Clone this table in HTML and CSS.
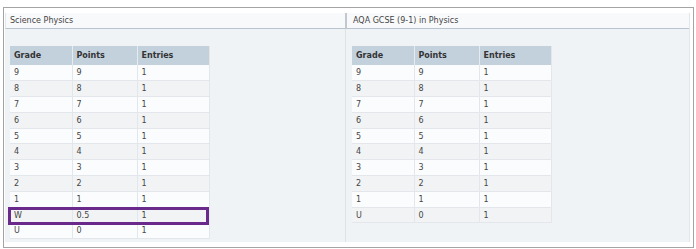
FILE: index.html
```html
<!DOCTYPE html>
<html>
<head>
<meta charset="utf-8">
<link rel="stylesheet" href="styles.css">
</head>
<body>
<div class="outer">
  <div class="panels">
    <div class="panel">
      <div class="panel-head">Science Physics</div>
      <div class="panel-body">
        <div class="table-wrap">
          <table class="grades">
            <colgroup><col class="c1"><col class="c2"><col class="c3"></colgroup>
            <thead><tr><th>Grade</th><th>Points</th><th>Entries</th></tr></thead>
            <tbody>
              <tr><td>9</td><td>9</td><td>1</td></tr>
              <tr><td>8</td><td>8</td><td>1</td></tr>
              <tr><td>7</td><td>7</td><td>1</td></tr>
              <tr><td>6</td><td>6</td><td>1</td></tr>
              <tr><td>5</td><td>5</td><td>1</td></tr>
              <tr><td>4</td><td>4</td><td>1</td></tr>
              <tr><td>3</td><td>3</td><td>1</td></tr>
              <tr><td>2</td><td>2</td><td>1</td></tr>
              <tr><td>1</td><td>1</td><td>1</td></tr>
              <tr><td>W</td><td>0.5</td><td>1</td></tr>
              <tr><td>U</td><td>0</td><td>1</td></tr>
            </tbody>
          </table>
          <div class="highlight"></div>
        </div>
      </div>
    </div>
    <div class="panel panel-right">
      <div class="panel-head">AQA GCSE (9-1) in Physics</div>
      <div class="panel-body">
        <div class="table-wrap">
          <table class="grades">
            <colgroup><col class="c1"><col class="c2"><col class="c3"></colgroup>
            <thead><tr><th>Grade</th><th>Points</th><th>Entries</th></tr></thead>
            <tbody>
              <tr><td>9</td><td>9</td><td>1</td></tr>
              <tr><td>8</td><td>8</td><td>1</td></tr>
              <tr><td>7</td><td>7</td><td>1</td></tr>
              <tr><td>6</td><td>6</td><td>1</td></tr>
              <tr><td>5</td><td>5</td><td>1</td></tr>
              <tr><td>4</td><td>4</td><td>1</td></tr>
              <tr><td>3</td><td>3</td><td>1</td></tr>
              <tr><td>2</td><td>2</td><td>1</td></tr>
              <tr><td>1</td><td>1</td><td>1</td></tr>
              <tr><td>U</td><td>0</td><td>1</td></tr>
            </tbody>
          </table>
        </div>
      </div>
    </div>
  </div>
</div>
</body>
</html>
```

FILE: styles.css
```css
* { box-sizing: border-box; }
html, body { margin: 0; padding: 0; background: #ffffff; }
body {
  font-family: "DejaVu Sans", Verdana, sans-serif;
  font-size: 8px;
  color: #444;
}
.outer {
  margin: 7px 0 0 3px;
  width: 691px;
  height: 241px;
  border: 1px solid #a4a4a4;
  padding: 5px 3px 5px 1px;
}
.panels {
  display: grid;
  grid-template-columns: 340px 1fr;
  height: 229px;
  background: #eff3f6;
  border-right: 1px solid #e2e6ea;
}
.panel {
  display: flex;
  flex-direction: column;
  min-width: 0;
}
.panel-right {
  border-left: 1px solid #dde2e7;
}
.panel-head {
  height: 16px;
  line-height: 15px;
  background: #f8f9fb;
  border-bottom: 1px solid #b9c4cf;
  border-left: 1px solid #e3e7eb;
  padding-left: 4px;
  color: #444;
}
.panel-right .panel-head {
  border-left: 2px solid #c2c8cf;
  margin-left: -1px;
  padding-left: 6px;
}
.panel-body {
  padding: 17px 5px 0 5px;
}
.panel-right .panel-body {
  padding-left: 6px;
}
.table-wrap {
  position: relative;
  width: 199px;
}
.grades {
  border-collapse: collapse;
  width: 199px;
  table-layout: fixed;
}
.c1 { width: 62px; }
.c2 { width: 65px; }
.c3 { width: 72px; }
.grades th {
  height: 19px;
  background: #c3d1dd;
  color: #333;
  font-weight: bold;
  text-align: left;
  padding: 0 0 0 4px;
  border-right: 1px solid #e6ebf0;
}
.grades td {
  height: 15.8px;
  padding: 1px 0 0 4px;
  border-right: 1px solid #e3e7eb;
  border-bottom: 1px solid #e3e7eb;
  line-height: 10px;
}
.grades th:last-child, .grades td:last-child { border-right: 1px solid #e3e7eb; }
.grades tbody tr:nth-child(odd) td { background: #fbfcfe; }
.grades tbody tr:nth-child(even) td { background: #f1f3f5; }
.highlight {
  position: absolute;
  left: -2px;
  top: 161px;
  width: 201px;
  height: 18px;
  border: 3px solid #6a2a8c;
}
```
